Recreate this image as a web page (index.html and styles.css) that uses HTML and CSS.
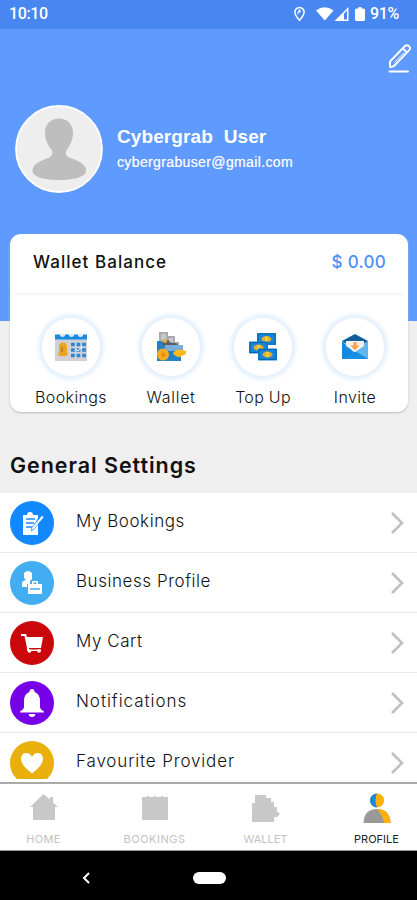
FILE: index.html
```html
<!DOCTYPE html>
<html lang="en">
<head>
<meta charset="utf-8">
<title>Profile</title>
<link rel="stylesheet" href="styles.css">
</head>
<body>
<div class="screen">
  <header class="status">
    <span class="clock">10:10</span>
    <svg class="status-icons" width="76" height="18" viewBox="0 0 76 18">
      <path d="M7.5 2.5a4.6 4.6 0 0 0-4.6 4.7c0 3 4.6 8 4.6 8s4.6-5 4.6-8a4.600 4.600 0 0 0-4.600-4.700z" fill="none" stroke="#fff" stroke-width="1.500"/>
      <path d="M5.800 9.500V7.500q0-1.500 1.700-1.500M7 4.500 9 6 7 7.500z" fill="#fff" stroke="#fff" stroke-width=".7"/>
      <path d="M24 5.500Q32.500-1 41.500 5.500L32.800 15.500z" fill="#fff"/>
      <path d="M42.500 16 56.500 2v14z" fill="#fff"/><path d="M52 8.500l3-3v9h-3z" fill="#4a86f0"/>
      <path d="M66.500 2h3v1.500h2q1.500 0 1.500 1.500v9.500q0 1.500-1.500 1.500h-7q-1.500 0-1.500-1.500V5q0-1.500 1.500-1.500h2z" fill="#fff"/>
    </svg>
    <span class="percent">91%</span>
  </header>
  <main class="content">
    <section class="hero">
      <svg class="edit" width="26" height="30" viewBox="0 0 26 30" fill="none" stroke="#fff" stroke-width="1.900" stroke-linejoin="round">
        <path d="M3 24V18.500L18 3q2-1.800 4 .2t.2 4L7.500 22.500Q6 24 3 24zM16 5.500l4.500 4.500"/>
        <path d="M7.500 19.500 17 9.500" stroke-width="1"/>
        <path d="M2.500 28.500H21" stroke-linecap="round"/>
      </svg>
      <div class="user">
        <svg class="avatar" width="88" height="88" viewBox="0 0 88 88">
          <circle cx="44" cy="44" r="43" fill="#eee" stroke="#fff" stroke-width="1.800"/>
          <path d="M44 13.500c9 0 14.500 6.500 14 15.500-.4 7-3.500 12-6.500 16-1.500 4 0 6.500 4 8 8 2.500 15.500 6.500 15.500 12.500 0 7-14 9.500-27 9.500s-26.500-2.500-26.500-9.500c0-6 8-10 15.500-12.500 4-1.500 5-4 4-8-3.500-4-6.500-9-7-16-.5-9 5-15.500 14-15.500z" fill="#bebebe"/>
        </svg>
        <div><h1 class="name">Cybergrab&nbsp; User</h1><p class="email">cybergrabuser@gmail.com</p></div>
      </div>
    </section>
    <section class="card">
      <div class="balance"><span class="t-balance">Wallet Balance</span><span class="amount">$ 0.00</span></div>
      <div class="actions">
        <div class="action"><span class="ring">
          <svg width="34" height="32" viewBox="0 0 34 32"><path d="M1 5h32v25H1z" fill="#d2d0d4"/><path d="M1 3.500h32v5H1z" fill="#168be4"/><path d="M6 3h5v2q-2.500 2-5 0zM15 3h5v2q-2.500 2-5 0zM24 3h5v2q-2.500 2-5 0z" fill="#dce8f2"/><path d="M4 23l1-2v-5q0-4.500 4-4.500t4 4.500v5l1 3-3 1H6z" fill="#e9a51d"/><path d="M7 16h2v5H7z" fill="#b98229"/><path d="M17 13.500h15M17 19h15M17 24.500h15" stroke="#2588db" stroke-width="3.500" stroke-dasharray="3.700 1.900"/><path d="m22 18 2 2 4-5" fill="none" stroke="#fff"/></svg></span><span class="label l1">Bookings</span></div>
        <div class="action"><span class="ring">
          <svg width="34" height="32" viewBox="0 0 34 32"><path d="M5 1h9v4h7v6h4v10H5z" fill="#aaa9ad"/><path d="M7 3h5v6H7zM15 7h4v4h-4z" fill="#c7c7c9"/><path d="M3 10h4l4 4h16v16H3z" fill="#2583c5"/><path d="M7 11h4l3-2 3 3h5l3 3H10z" fill="#55606b"/><path d="M11 14h18v6H11z" fill="#78aed7"/><circle cx="9" cy="23.500" r="6" fill="#f6ac22"/><path d="m9 20 3 4-3 3-2-3z" fill="#ed8c13"/><path d="M19 22q4-5 9-3l4 1v3l-6 3q-5 0-7-4z" fill="#ffb91f"/><circle cx="11" cy="10" r="2" fill="#e8ad3a"/></svg></span><span class="label l2">Wallet</span></div>
        <div class="action"><span class="ring">
          <svg width="34" height="32" viewBox="0 0 34 32"><g id="note"><path d="M11 2h19v12H11z" fill="#1686dc"/><path d="M12 3h17v10H12z" fill="none" stroke="#0667a8"/><ellipse cx="20.500" cy="8" rx="5" ry="3" fill="#dfb12c"/><path d="M20.500 5.500v5" stroke="#f8d34b" stroke-width="2"/></g><use href="#note" x="-8" y="8.500"/><use href="#note" x="1" y="15.500"/></svg></span><span class="label l3">Top Up</span></div>
        <div class="action"><span class="ring">
          <svg width="34" height="32" viewBox="0 0 34 32"><path d="M4 10 17 3l13 7-13 9z" fill="#115e9d"/><path d="M4 10v18h26V10L17 22z" fill="#1589df"/><path d="M4 28 17 20l13 8z" fill="#168fe5"/><path d="M30 10v18L17 20z" fill="#60b5ed"/><path d="M8 10h18v5l-9 6-9-6z" fill="#f5f0eb"/><path d="M15.500 11h3v3.500h3L17 19l-4.500-4.500h3z" fill="#f3a04a"/></svg></span><span class="label l4">Invite</span></div>
      </div>
    </section>
    <h2 class="heading">General Settings</h2>
    <ul class="rows">
      <li class="row"><span class="badge blue"><svg width="26" height="26" viewBox="0 0 26 26"><path d="M4 5h4q0-3 3-3t3 3h5v20H4z" fill="#fff"/><path d="M7 9h9M7 13h8M7 17h6M13 20l7-12" stroke="#168cff" stroke-width="1.500"/><path d="M15 19 25 7l-2-1.500L13 17l-.5 4z" fill="#fff" stroke="#168cff" stroke-width=".7"/></svg></span><span class="title r1">My Bookings</span><svg class="chevron" width="16" height="24" viewBox="0 0 16 24"><path d="m2 2 10 10L2 22"/></svg></li>
      <li class="row"><span class="badge sky"><svg width="26" height="26" viewBox="0 0 26 26" fill="#fff"><path d="M5 3q4-4 8 0v6l-2 2v3H8v3H3V13q0-2 4-3L5 8z"/><path d="M9 14h4v-2q0-1 1-1h4q1 0 1 1v2h4v10H9zM14.500 12.500V14h3v-1.500z" fill-rule="evenodd"/><path d="M11 19h10" stroke="#42adf2" stroke-width="1.500"/></svg></span><span class="title r2">Business Profile</span><svg class="chevron" width="16" height="24" viewBox="0 0 16 24"><path d="m2 2 10 10L2 22"/></svg></li>
      <li class="row"><span class="badge red"><svg width="26" height="26" viewBox="0 0 26 26" fill="#fff"><path d="M2 4h5l1 3h16l-2 11H10v1.500h12V21H8v-3L5.500 6H2z"/><circle cx="10.500" cy="21" r="1.800"/><circle cx="20" cy="21" r="1.800"/></svg></span><span class="title r3">My Cart</span><svg class="chevron" width="16" height="24" viewBox="0 0 16 24"><path d="m2 2 10 10L2 22"/></svg></li>
      <li class="row"><span class="badge purple"><svg width="26" height="30" viewBox="0 0 26 30" fill="#fff"><path d="M13 1q2.500 0 2.500 3Q21 6 21 13v6q0 2 4 4.500v1H1v-1Q5 21 5 19v-6q0-7 5.500-9 0-3 2.500-3zM9.500 26h7Q16 29 13 29t-3.500-3z"/></svg></span><span class="title r4">Notifications</span><svg class="chevron" width="16" height="24" viewBox="0 0 16 24"><path d="m2 2 10 10L2 22"/></svg></li>
      <li class="row"><span class="badge gold"><svg width="26" height="26" viewBox="0 0 26 26" fill="#fff"><path d="M13 23.500Q2 15 2 9q0-6 5.500-6Q11 3 13 7q2-4 5.500-4Q24 3 24 9q0 6-11 14.500z"/></svg></span><span class="title r5">Favourite Provider</span><svg class="chevron" width="16" height="24" viewBox="0 0 16 24"><path d="m2 2 10 10L2 22"/></svg></li>
    </ul>
  </main>
  <nav class="tabs">
    <div class="tab"><svg width="30" height="30" viewBox="0 0 30 30" fill="#c8c8c8"><path d="M1 14 14.500 1 21 6.500V4h3v5.500l5 4.500H26v13H4V14z"/></svg><span class="n1">HOME</span></div>
    <div class="tab"><svg width="30" height="30" viewBox="0 0 30 30" fill="#c8c8c8"><path d="M2 4h5V3h2v1h5V3h2v1h5V3h2v1h5v22q0 1-1 1H3q-1 0-1-1z"/></svg><span class="n2">BOOKINGS</span></div>
    <div class="tab"><svg width="30" height="30" viewBox="0 0 30 30" fill="#c8c8c8"><path d="M4 2h11v3h5v4h3v5h3v4l3 3-3 3h-3v5H1V10h3z"/></svg><span class="n3">WALLET</span></div>
    <div class="tab active"><svg width="30" height="32" viewBox="0 0 30 32"><circle cx="15" cy="7.500" r="7" fill="#ffb10a"/><path d="M15 .5q-3 7 0 14A7 7 0 0 1 15 .5z" fill="#168bdf"/><path d="M1.500 30Q2 16 15 16t13.500 14z" fill="#999"/><path d="M15 16q13 0 13.500 14H22q-1-7-7-14z" fill="#ffb10a"/></svg><span class="n4">PROFILE</span></div>
  </nav>
  <footer class="system">
    <svg class="back" width="10" height="14" viewBox="0 0 10 14"><path d="M8 2 3 7l5 5" fill="none" stroke="#fff" stroke-width="2"/></svg>
    <span class="pill"></span>
  </footer>
</div>
</body>
</html>
```
FILE: styles.css
```css
* { box-sizing: border-box; margin: 0; padding: 0; }
body { width: 417px; height: 900px; overflow: hidden; font-family: Inter, "Open Sans", sans-serif; color: #111; background: #efefef; }
.screen { height: 900px; overflow: hidden; display: flex; flex-direction: column; }
.screen svg { flex: none; display: block; }
.status { height: 29px; flex: none; display: flex; align-items: center; background: #4886f1; color: #fff; padding: 0 0 1px 9px; font: 500 16px/28px Roboto, sans-serif; }
.clock { width: 283px; letter-spacing: -.4px; }
.percent { margin-left: 2px; letter-spacing: -.3px; }
.content { height: 750px; flex: none; overflow: hidden; }
.hero { height: 292px; background: #5f9aff; padding-top: 14px; }
.edit { margin-left: 387px; }
.user { display: flex; align-items: center; gap: 14px; padding-left: 15px; margin-top: 31px; height: 90px; font-family: "Liberation Sans", sans-serif; color: #fff; }
.user > div { flex: none; white-space: nowrap; }
.name { font-size: 19px; line-height: 26px; letter-spacing: .1px; }
.email { font-size: 14px; line-height: 25px; letter-spacing: .37px; -webkit-text-stroke: .2px #fff; }
.card { height: 178px; width: 398px; margin: -87px 0 0 10px; position: relative; background: #fff; border-radius: 11px; box-shadow: 0 1px 2px #bbb; }
.balance { height: 61px; margin: 0 5px; padding: 0 17px 4px 18px; display: flex; justify-content: space-between; align-items: center; border-bottom: 2px solid #f6f6f6; font-size: 17px; font-weight: 500; letter-spacing: .3px; }
.t-balance { letter-spacing: 1.05px; }
.amount { color: #4a91f7; }
.actions { display: grid; grid-template-columns: 122px 78px 106px 78px; padding-top: 22px; }
.action { display: flex; flex-direction: column; align-items: center; white-space: nowrap; }
.ring { width: 60px; height: 60px; border-radius: 50%; display: flex; align-items: center; justify-content: center; border: 1px solid #e4f0fc; box-shadow: 0 0 5px 2px #d9ebfc; }
.label { font-size: 16px; line-height: 24px; margin-top: 8px; font-weight: 300; }
.l1 { letter-spacing: .4px; }
.l2 { letter-spacing: .7px; }
.l3 { letter-spacing: .3px; }
.l4 { letter-spacing: .4px; }
.heading { height: 81px; padding: 28px 0 0 10px; font-size: 21.5px; line-height: 50px; font-weight: 600; letter-spacing: .95px; }
.rows { list-style: none; }
.row { height: 60px; display: flex; align-items: center; padding: 0 11px 0 10px; background: #fff; border-bottom: 1px solid #e9e9e9; }
.badge { flex: none; width: 44px; height: 44px; border-radius: 50%; display: flex; align-items: center; justify-content: center; }
.title { flex: 1; padding: 0 0 3px 22px; font-size: 17px; line-height: 22px; font-weight: 300; }
.r1, .r2, .r3 { letter-spacing: .55px; }
.r4 { letter-spacing: .95px; }
.r5 { letter-spacing: .85px; }
.chevron path { fill: none; stroke: #c1c1c1; stroke-width: 2.6; }
.blue { background: #1288ff; }
.sky { background: #43adf2; }
.red { background: #ca080c; }
.purple { background: #7600e8; }
.gold { background: #e9b00b; }
.tabs { height: 72px; width: 441px; flex: none; display: grid; grid-template-columns: repeat(4, 111px); margin-left: -12px; padding: 14px 0 0; background: linear-gradient(#fff 3px, #aaa 3px, #aaa 5px, #fff 5px); border-bottom: 1px solid #999; }
.tab { display: flex; flex-direction: column; align-items: center; justify-content: space-between; padding-bottom: 4px; color: #c2c2c2; font-size: 11px; line-height: 14px; }
.tab.active { color: #222; }
.n1 { letter-spacing: .3px; }
.n2 { letter-spacing: .5px; }
.system { height: 49px; flex: none; background: #000; display: flex; align-items: center; padding: 4px 0 0 81px; }
.pill { width: 33px; height: 12px; border-radius: 6px; background: #fff; margin-left: 102px; }
```
